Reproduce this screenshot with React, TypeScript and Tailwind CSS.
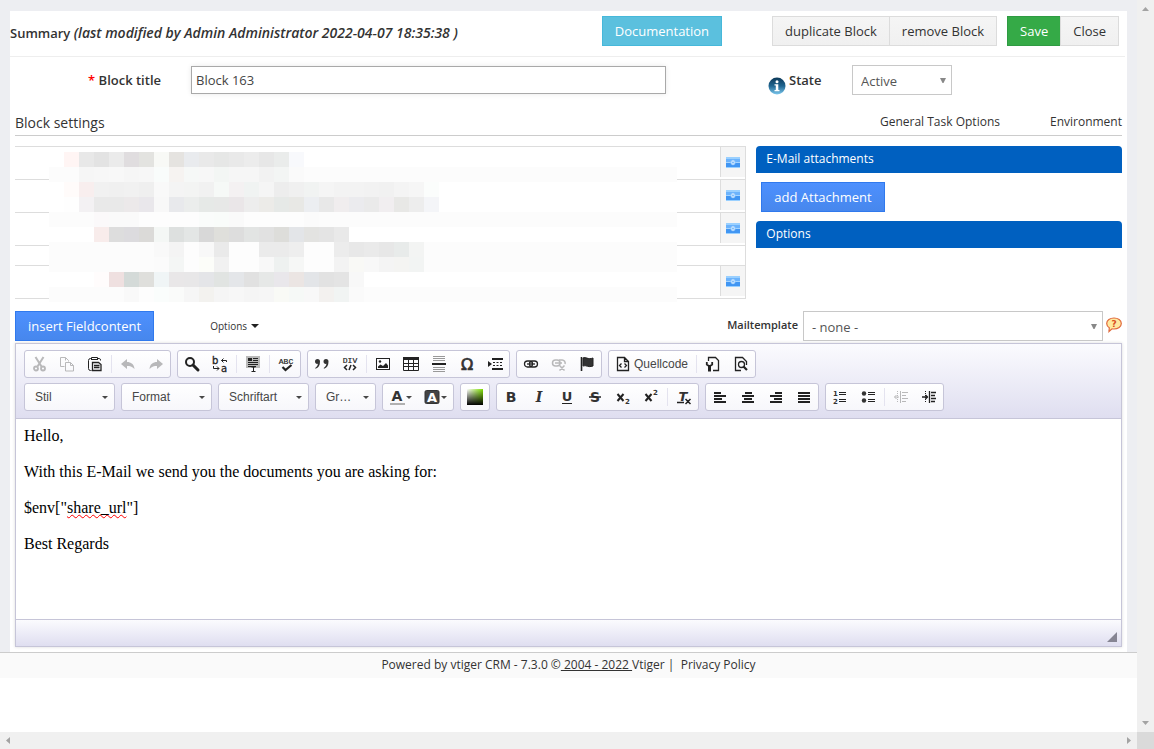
import React from "react";

type Kids = { children?: React.ReactNode };

/* Redacted preview: 15px cells; "from" is the column of the first cell. */
const mosaic: { bg: string; from: number; cells: string[] }[] = [
  { bg: "#ffffff", from: 1, cells: ["#fff5f4", "#e8e8e8", "#e3e3e3", "#ebebeb", "#e0dddf", "#e3e3e0", "#f8f9f6", "#e5e3e0", "#e9ebee", "#e9e9e9", "#e6e7e6", "#e9e9e9", "#ececec", "#e7e7e7", "#eaeceb", "#f8f9fc"] },
  { bg: "#fcfcfc", from: 2, cells: ["#f6f6f6", "#f7f7f7", "#f8f8f8", "#f6f6f6", "#f7f7f7", "#f9fcfb", "#f6f3f1", "#f6f8f7", "#f7f7f7", "#f3f6f4", "#f6f6f6", "#f6f6f6", "#f2f2f2", "#f3f5f4", "#fafafa"] },
  { bg: "#ffffff", from: 1, cells: ["#fffbfa", "#f8eeee", "#f1f1f1", "#f0f0f0", "#f1f1f1", "#efefef", "#f9f9f9", "#f4f4f4", "#f3f4f3", "#f1f1f1", "#f6f9f7", "#f4f1f2", "#f0f3f2", "#f5f5f5", "#ededed", "#f0f0f0", "#f1f3f2", "#f5f5f5", "#f3f3f3", "#f3f3f3", "#f2f2f2", "#f1f1f1", "#f4f4f4", "#f6f6f6", "#fbfdfc"] },
  { bg: "#ffffff", from: 1, cells: ["#fefefe", "#f3f1f3", "#e9e9e9", "#e9e9e9", "#ece9ea", "#e9e7eb", "#f8f8f8", "#e8e9ec", "#ebedec", "#e6e9e7", "#e7e8e7", "#eae6e8", "#ededed", "#ecebe8", "#e6e9e7", "#e8e8e5", "#eceef1", "#e8e8e8", "#f0edee", "#ebebee", "#eaeaea", "#f1eef0", "#e8e8e6", "#ededed", "#f4f5f8"] },
  { bg: "#fcfcfc", from: 3, cells: ["#fbf9fa", "#fafafa", "#fafafa", "#fdfdfd", "#fdfdfd", "#fdfdfd", "#fdfdfd", "#fafcfb", "#f9fcfa", "#fafafa", "#fdfdfd", "#fdfdfd", "#fdfdfd", "#fdfdfd", "#fbfbfb"] },
  { bg: "#ffffff", from: 3, cells: ["#f8eceb", "#dddddd", "#dcdbde", "#dbdad8", "#f4f7f5", "#dde0df", "#e3e6e5", "#d8d8d8", "#dfdfdb", "#dddddd", "#e2e4e3", "#e1e1e1", "#ddddda", "#e3e5e8", "#e3e3e1", "#e4e4e4", "#e9e9e9"] },
  { bg: "#fcfcfc", from: 7, cells: ["#f9f9f9", "#f4f4f4", "#fdfdfd", "#f8f8f8", "#eaeaea", "#fdfdfd", "#fdfdfd", "#ebebeb", "#ebebeb", "#eeeeee", "#fdfdfd", "#fdfdfd", "#ececec", "#e8e8e8", "#eaeaea", "#e7e7e7", "#e8ebea", "#f3f4f3"] },
  { bg: "#fcfcfc", from: 7, cells: ["#fbfbfb", "#f4f6f5", "#fdfdfd", "#fcfdf9", "#f1f1f1", "#fdfdfd", "#fdfdfd", "#f8f8f8", "#eef1f0", "#f6f7f6", "#fdfdfd", "#fdfdfd", "#f3f3f3", "#f9f9f6", "#f8f8f8", "#f4f4f4", "#f4f4f2", "#f2f4f3"] },
  { bg: "#ffffff", from: 3, cells: ["#fffcfc", "#efe0e0", "#d4dad8", "#dfdfdc", "#f0f5f6", "#e9e7e8", "#e8e7e8", "#e4e5e8", "#e1e4e2", "#e4e6e9", "#e1e1e1", "#e6e8e7", "#e9e7eb", "#ebe5e3", "#e3e5e8", "#e2e2e2", "#e4e4e4", "#f8f8f8"] },
  { bg: "#fcfcfc", from: 5, cells: ["#f9f9f9", "#fdfdfd", "#fafdfc", "#fafbfa", "#f6f6f6", "#f3f2ef", "#f5f5f5", "#f7f7f7", "#f5f5f5", "#f6f6f6", "#f9faf6", "#f6f9f7", "#f8f8f8", "#f3f1ef", "#f1f4f3", "#fafafa"] },
];

function Mosaic() {
  return (
    <svg width="628" height="150" shapeRendering="crispEdges" className="absolute left-[34px] top-[6px]" aria-hidden="true">
      {mosaic.map((row, r) => (
        <g key={r}>
          <rect x="0" y={r * 15} width="628" height="15" fill={row.bg} />
          {row.cells.map((fill, c) => (
            <rect key={c} x={(row.from + c) * 15} y={r * 15} width="15" height="15" fill={fill} />
          ))}
        </g>
      ))}
    </svg>
  );
}

function Icon({ children }: Kids) {
  return (
    <svg width="16" height="16" viewBox="0 0 16 16" fill="none" stroke="#222" className="overflow-visible" aria-hidden="true">
      {children}
    </svg>
  );
}

function Tool({ label, disabled, children }: Kids & { label: string; disabled?: boolean }) {
  return (
    <button type="button" aria-label={label} disabled={disabled} className={disabled ? "flex h-[26px] w-7 items-center justify-center opacity-30" : "flex h-[26px] w-7 items-center justify-center"}>
      <Icon>{children}</Icon>
    </button>
  );
}

function Group({ children }: Kids) {
  return <div className="flex items-center rounded-[3px] border border-[#c6c5d8] bg-linear-to-b from-white to-[#f7f7fb]">{children}</div>;
}

function Sep() {
  return <span className="mx-[2px] h-[18px] w-px bg-[#e4e3ef]" />;
}

function Caret() {
  return (
    <svg width="6" height="3" viewBox="0 0 6 3" className="pointer-events-none" aria-hidden="true">
      <path d="M0 0H6L3 3Z" fill="#474747" />
    </svg>
  );
}

function Combo({ text, label, small }: { text: string; label: string; small?: boolean }) {
  return (
    <Group>
      <div className={small ? "relative h-[26px] w-[59px]" : "relative h-[26px] w-[89px]"}>
        <select aria-label={label} className="h-full w-full appearance-none bg-transparent pl-[10px] font-['Liberation_Sans',Arial,sans-serif] text-[12px] text-[#474747] outline-none">
          <option>{text}</option>
        </select>
        <span className="pointer-events-none absolute right-[6px] top-[12px] flex">
          <Caret />
        </span>
      </div>
    </Group>
  );
}

function Glyph({ children, x = 8, y = 13, size = 14, italic, serif }: Kids & { x?: number; y?: number; size?: number; italic?: boolean; serif?: boolean }) {
  return (
    <text x={x} y={y} fontSize={size} fontWeight="700" fontStyle={italic ? "italic" : "normal"} textAnchor="middle" fill="#333" stroke="none" fontFamily={serif ? "DejaVu Serif, serif" : "DejaVu Sans, sans-serif"}>
      {children}
    </text>
  );
}

function MoneyIcon() {
  return (
    <svg width="14" height="11" viewBox="0 0 14 11" aria-hidden="true">
      <rect width="14" height="11" fill="#9ad0ff" />
      <rect y="2" width="14" height="3" fill="#6cb3fc" />
      <rect y="6" width="14" height="4" fill="#4196f3" />
      <rect y="5" width="14" height="1" fill="#a5d4ff" />
      <ellipse cx="7" cy="5.500" rx="2.500" ry="2.800" fill="#8cc5fd" />
      <ellipse cx="7" cy="5.500" rx="1.200" ry="1.700" fill="#5ba8f6" stroke="#eef7ff" strokeWidth="0.900" />
    </svg>
  );
}

function FieldRow({ short }: { short?: boolean }) {
  if (short) return <div className="h-5 border-t border-[#dddddd]" />;
  return (
    <div className="flex h-[33px] items-start justify-end border-t border-[#dddddd]">
      <button type="button" aria-label="Insert field" className="flex h-[30px] w-[25px] items-center justify-center border-l border-[#dddddd] bg-[#f5f5f5]">
        <MoneyIcon />
      </button>
    </div>
  );
}

function SelectArrow() {
  return (
    <svg width="6" height="5" viewBox="0 0 6 5" className="pointer-events-none absolute right-[6px] top-[13px]" aria-hidden="true">
      <path d="M0 0H6L3.500 5H2.500Z" fill="#888" />
    </svg>
  );
}

const plainButton = "h-[30px] border border-[#dcdcdc] bg-linear-to-b from-[#f5f5f5] to-[#f0f0f0] px-3 text-[13px] leading-[28px] text-[#333]";
const blueButton = "h-[30px] border border-[#3079ed] bg-linear-to-b from-[#4d90fe] to-[#4787ed] px-3 text-[13px] leading-[28px] text-white";
const panelTitle = "h-[27px] rounded-t-[4px] bg-[#0060c0] px-[10px] text-[12px] font-medium leading-[25px] text-white";
const selectBox = "h-full w-full appearance-none border border-[#c8c8c8] bg-white px-2 pt-[3px] text-[13px] text-[#555] outline-none";

function Toolbar() {
  return (
    <div className="flex flex-col gap-[5px] border-b border-[#c6c5d8] bg-linear-to-b from-[#fbfbfe] to-[#dfdef0] px-2 pb-[7px] pt-[6px]">
      <div className="flex flex-wrap gap-[6px]">
        <Group>
          <Tool label="Cut" disabled>
            <path d="M4.500 1L10.500 10.500M12.500 1L6.500 10.500" strokeWidth="2" />
            <circle cx="5" cy="12.500" r="2" strokeWidth="1.800" />
            <circle cx="12" cy="12.500" r="2" strokeWidth="1.800" />
          </Tool>
          <Tool label="Copy" disabled>
            <path d="M5.500 10.500H1.500V1.500H6.500L9.500 4.500V5.500M6.500 1.500V4.500" />
            <path d="M6.500 6.500H11.500L14.500 9.500V15H6.500ZM11.500 6.500V9.500H14.500" />
          </Tool>
          <Tool label="Paste">
            <path d="M4.500 14.500H3.500Q1.500 14.500 1.500 12.500V4.500Q1.500 2.500 3.500 2.500H4M11 2.500H12.500Q13.500 2.500 13.500 4.500" />
            <path d="M4.500 3V1.500H10.500V3M4 3.500H11" />
            <path d="M5.500 6.500H11.500L14 8.500V14.500H5.500ZM7 9.500H12.500M7 11.500H12.500" strokeWidth="1.300" />
          </Tool>
          <Sep />
          <Tool label="Undo" disabled>
            <path d="M1 8L7 3V6C11 6 14 8 14.500 13C12 10.500 10 10 7 10V13Z" fill="#222" stroke="none" />
          </Tool>
          <Tool label="Redo" disabled>
            <path d="M15 8L9 3V6C5 6 2 8 1.500 13C4 10.500 6 10 9 10V13Z" fill="#222" stroke="none" />
          </Tool>
        </Group>
        <Group>
          <Tool label="Find">
            <circle cx="6" cy="6" r="4" strokeWidth="2" />
            <path d="M9 9L14 14" strokeWidth="3" strokeLinecap="round" />
          </Tool>
          <Tool label="Replace">
            <text x="0" y="8" fontSize="10" fill="#222" stroke="#222" strokeWidth="0.300" fontFamily="DejaVu Sans, sans-serif">b</text>
            <text x="9" y="15.500" fontSize="10" fill="#222" stroke="#222" strokeWidth="0.300" fontFamily="DejaVu Sans, sans-serif">a</text>
            <path d="M14.500 6V4.500H9.500M11.500 2.500L9.500 4.500L11.500 6.500M1.500 10V12.500H7M5 10.500L7 12.500L5 14.500" />
          </Tool>
          <Sep />
          <Tool label="Select all">
            <rect x="1" y="0" width="14" height="12" fill="#b9b9b9" stroke="none" />
            <path d="M8 2.500H13M8 4.500H13M3 6.500H13M3 8.500H13M3 10.500H11" />
            <path d="M3 3.500H7" strokeWidth="3" />
            <path d="M8.500 11V16M6.500 11H10.500M6.500 15.500H10.500" />
          </Tool>
          <Sep />
          <Tool label="Spell check">
            <text x="8" y="8" fontSize="8" textAnchor="middle" fill="#222" stroke="#222" strokeWidth="0.200" fontFamily="Liberation Mono, monospace">ABC</text>
            <path d="M4.500 11L7.500 14L13.500 9" strokeWidth="2.200" />
          </Tool>
        </Group>
        <Group>
          <Tool label="Block quote">
            <path d="M1 5.500a2.500 2.500 0 0 1 5 0C6 9.500 4.500 11.500 1.500 12.800L1.200 12C3 10.800 3.700 9.500 3.900 7.800C2.300 8.300 1 7 1 5.500ZM9.500 5.500a2.500 2.500 0 0 1 5 0C14.500 9.500 13 11.500 10 12.800L9.700 12C11.500 10.800 12.200 9.500 12.400 7.800C10.800 8.300 9.500 7 9.500 5.500Z" fill="#333" stroke="none" />
          </Tool>
          <Tool label="Create div container">
            <text x="8" y="7" fontSize="8" textAnchor="middle" fill="#222" stroke="#222" strokeWidth="0.200" fontFamily="Liberation Mono, monospace">DIV</text>
            <path d="M5 9L2.500 11.500L5 14M11 9L13.500 11.500L11 14M9 9L7 14" strokeWidth="1.500" />
          </Tool>
          <Sep />
          <Tool label="Image">
            <rect x="1.500" y="2.500" width="13" height="11" />
            <circle cx="5" cy="5.500" r="1.200" fill="#222" stroke="none" />
            <path d="M3 12V10.500L5.500 8.500L8 10L11 7L13 9.500V12Z" fill="#222" stroke="none" />
          </Tool>
          <Tool label="Table">
            <path d="M0.500 2.500H15.500V14.500H0.500ZM0.500 7.500H15.500M0.500 10.500H15.500M5.500 4V14.500M10.500 4V14.500" />
            <path d="M0 2.500H16" strokeWidth="3" />
          </Tool>
          <Tool label="Horizontal line">
            <path d="M2 0.500H14M2 2.500H14M2 4.500H14M2 11.500H14M2 13.500H14M2 15.500H14" stroke="#999" />
            <path d="M1 8H15" strokeWidth="2" />
          </Tool>
          <Tool label="Special character">
            <text x="8" y="14" fontSize="16" textAnchor="middle" fill="#333" stroke="#333" strokeWidth="0.700" fontFamily="DejaVu Sans, sans-serif">Ω</text>
          </Tool>
          <Tool label="Page break">
            <path d="M1 5L5 8L1 11Z" fill="#222" stroke="none" />
            <path d="M5 3H16M5 13H16" strokeWidth="2" />
            <path d="M6 6.500H16M6 9.500H16" strokeDasharray="2 1.500" />
          </Tool>
        </Group>
        <Group>
          <Tool label="Link">
            <rect x="1.500" y="5" width="8" height="6" rx="3" strokeWidth="1.300" />
            <rect x="6.500" y="5" width="8" height="6" rx="3" strokeWidth="1.300" />
            <path d="M4 8H12" strokeWidth="1.300" />
          </Tool>
          <Tool label="Unlink" disabled>
            <rect x="1.500" y="4" width="7.500" height="6" rx="3" strokeWidth="1.500" />
            <path d="M8 4H11A3 3 0 0 1 14 8M4 7H11M8.500 9.500L13.500 14.500M13.500 9.500L8.500 14.500" strokeWidth="1.500" />
          </Tool>
          <Tool label="Anchor">
            <path d="M2.500 1V15" strokeWidth="1.600" />
            <path d="M4 2C7 0.500 9 4 14 2V10C9 12 7 8.500 4 10Z" fill="#333" stroke="#222" />
          </Tool>
        </Group>
        <Group>
          <button type="button" className="flex h-[26px] items-center gap-[3px] px-[6px] font-['Liberation_Sans',Arial,sans-serif] text-[12px] leading-[26px] text-[#474747]">
            <Icon>
              <path d="M8 14.500H2.500V1.500H9.500L13.500 5.500V14.500H8M9.500 1.500V5.500H13.500" strokeWidth="1.300" />
              <path d="M6.500 7.500L4.500 9.500L6.500 11.500M9.500 7.500L11.500 9.500L9.500 11.500" strokeWidth="1.300" />
            </Icon>
            Quellcode
          </button>
          <Sep />
          <Tool label="Templates">
            <path d="M3.500 5V1.500H10.500L13.500 4.500V14.500H8" strokeWidth="1.300" />
            <path d="M1.800 6V8.500L4.500 10.500L7.200 8.500V6" strokeWidth="1.800" />
            <path d="M4.500 9V15.500" strokeWidth="3" />
          </Tool>
          <Tool label="Preview">
            <path d="M8 14.500H2.500V1.500H9.500L13.500 5.500V9" strokeWidth="1.300" />
            <circle cx="8.500" cy="8.500" r="3" strokeWidth="1.300" />
            <path d="M10.500 10.500L14 14" strokeWidth="2.200" />
          </Tool>
        </Group>
      </div>
      <div className="flex flex-wrap gap-[6px]">
        <Combo text="Stil" label="Stil" />
        <Combo text="Format" label="Format" />
        <Combo text="Schriftart" label="Schriftart" />
        <Combo text="Gr…" label="Größe" small />
        <Group>
          <button type="button" aria-label="Text colour" className="flex h-[26px] w-[35px] items-center justify-center gap-px">
            <Icon>
              <Glyph y={12}>A</Glyph>
              <path d="M1 15H16" stroke="#999" strokeWidth="1.500" />
            </Icon>
            <Caret />
          </button>
          <button type="button" aria-label="Background colour" className="flex h-[26px] w-[35px] items-center justify-center gap-px">
            <Icon>
              <rect x="1" y="1.500" width="14" height="13" rx="1.500" fill="#444" stroke="#333" />
              <text x="8" y="13" fontSize="13" fontWeight="700" textAnchor="middle" fill="#fff" stroke="none" fontFamily="DejaVu Sans, sans-serif">A</text>
            </Icon>
            <Caret />
          </button>
        </Group>
        <Group>
          <Tool label="Colour picker">
            <defs>
              <linearGradient id="hue" x1="0" x2="1" y1="0" y2="0">
                <stop offset="0" stopColor="#fff" />
                <stop offset="1" stopColor="#7fe000" />
              </linearGradient>
              <linearGradient id="shade" x1="0" x2="0" y1="0" y2="1">
                <stop offset="0" stopColor="#000" stopOpacity="0" />
                <stop offset="1" stopColor="#000" />
              </linearGradient>
            </defs>
            <rect width="16" height="16" fill="url(#hue)" stroke="none" />
            <rect width="16" height="16" fill="url(#shade)" stroke="none" />
          </Tool>
        </Group>
        <Group>
          <Tool label="Bold"><Glyph>B</Glyph></Tool>
          <Tool label="Italic"><Glyph italic serif>I</Glyph></Tool>
          <Tool label="Underline">
            <Glyph y={12} size={13}>U</Glyph>
            <path d="M3 14.500H13" />
          </Tool>
          <Tool label="Strikethrough">
            <Glyph>S</Glyph>
            <path d="M2 8H14" strokeWidth="1.500" />
          </Tool>
          <Tool label="Subscript">
            <path d="M2.500 5L8.500 12M8.500 5L2.500 12" strokeWidth="2" />
            <Glyph x={12.5} y={15} size={7}>2</Glyph>
          </Tool>
          <Tool label="Superscript">
            <path d="M2.500 5L8.500 12M8.500 5L2.500 12" strokeWidth="2" />
            <Glyph x={12.5} y={6} size={7}>2</Glyph>
          </Tool>
          <Sep />
          <Tool label="Remove format">
            <Glyph x={7} y={12} size={13} italic>T</Glyph>
            <path d="M1 13.500H8M9.500 10L14.500 15M14.500 10L9.500 15" strokeWidth="1.500" />
          </Tool>
        </Group>
        <Group>
          <Tool label="Align left"><path d="M2 3.500H9M2 6.500H14M2 9.500H10M2 12.500H14" strokeWidth="2" shapeRendering="crispEdges" /></Tool>
          <Tool label="Centre"><path d="M4.500 3.500H11.500M2 6.500H14M4 9.500H12M2 12.500H14" strokeWidth="2" shapeRendering="crispEdges" /></Tool>
          <Tool label="Align right"><path d="M7 3.500H14M2 6.500H14M6 9.500H14M2 12.500H14" strokeWidth="2" shapeRendering="crispEdges" /></Tool>
          <Tool label="Justify"><path d="M2 3.500H14M2 6.500H14M2 9.500H14M2 12.500H14" strokeWidth="2" shapeRendering="crispEdges" /></Tool>
        </Group>
        <Group>
          <Tool label="Numbered list">
            <path d="M7 3.500H14M7 5.500H14M7 10.500H14M7 12.500H14" />
            <Glyph x={3.5} y={7} size={7}>1</Glyph>
            <Glyph x={3.5} y={15} size={7}>2</Glyph>
          </Tool>
          <Tool label="Bulleted list">
            <path d="M8 3.500H15M8 5.500H15M8 10.500H15M8 12.500H15" />
            <circle cx="4" cy="4.500" r="2.200" fill="#333" stroke="none" />
            <circle cx="4" cy="11.500" r="2.200" fill="#333" stroke="none" />
          </Tool>
          <Sep />
          <Tool label="Decrease indent" disabled>
            <path d="M7.500 2V14M9 3.500H15M9 6.500H13M9 9.500H15M9 12.500H13M1.500 8H6M3.500 6L1.500 8L3.500 10" />
            <path d="M4.500 2V14" strokeDasharray="1 1" />
          </Tool>
          <Tool label="Increase indent">
            <path d="M8.500 2V14M10 3.500H15M10 6.500H14M10 9.500H15M10 12.500H14M1 8H7M4.500 6L6.500 8L4.500 10" strokeWidth="1.300" />
            <path d="M4.500 2V14" strokeDasharray="1 1" />
          </Tool>
        </Group>
      </div>
    </div>
  );
}

export default function App() {
  return (
    <div className="flex min-h-screen flex-col bg-white font-['Open_Sans',sans-serif] text-[13px] text-[#333]">
      <div className="flex flex-1">
        <main className="min-w-0 flex-1">
          <div className="bg-[#edeef2] px-[10px] pt-[11px]">
            <div className="bg-white pb-[5px]">
              <header className="mr-[2px] flex h-[46px] items-start border-b border-[#eeeeee] pr-[6px] pt-[5px]">
                <h1 className="flex-1 text-[13px] font-semibold leading-[34px]">
                  Summary <em className="text-[14px]">(last modified by Admin Administrator 2022-04-07 18:35:38 )</em>
                </h1>
                <button type="button" className="mr-[50px] h-[30px] border border-[#46b8da] bg-[#5bc0de] px-3 text-[13px] leading-[28px] text-white">
                  Documentation
                </button>
                <div className="mr-[10px] flex">
                  <button type="button" className={plainButton}>duplicate Block</button>
                  <button type="button" className={plainButton + " -ml-px"}>remove Block</button>
                </div>
                <div className="flex">
                  <button type="button" className="h-[30px] border border-[#2f9b43] bg-[#35aa47] px-3 text-[13px] font-medium leading-[28px] text-white">Save</button>
                  <button type="button" className={plainButton + " -ml-px"}>Close</button>
                </div>
              </header>

              <div className="flex h-[51px] items-start pt-2">
                <label htmlFor="title" className="mr-[30px] w-[151px] text-right font-semibold leading-[30px]">
                  <span className="text-[#ff0000]">*</span> Block title
                </label>
                <input id="title" defaultValue="Block 163" className="mr-[102px] mt-px h-7 min-w-0 flex-1 border border-[#a9a9a9] px-1 text-[13px] text-[#444] shadow-[0_0_5px_#e8e8e8] outline-none" />
                <svg width="18" height="18" viewBox="0 0 18 18" className="mr-[3px] mt-[12px]" aria-hidden="true">
                  <defs>
                    <linearGradient id="info" x1="0" x2="0" y1="0" y2="1">
                      <stop offset="0" stopColor="#0c3858" />
                      <stop offset="0.500" stopColor="#1f6590" />
                      <stop offset="1" stopColor="#7cc8ee" />
                    </linearGradient>
                  </defs>
                  <circle cx="9" cy="9" r="8.500" fill="url(#info)" />
                  <circle cx="9" cy="4.700" r="1.500" fill="#fff" />
                  <path d="M6.500 7.300H10.300V13H11.500V14.300H6.500V13H7.800V8.500H6.500Z" fill="#fff" />
                </svg>
                <label htmlFor="state" className="w-[63px] font-semibold leading-[30px]">State</label>
                <div className="relative mr-[175px] h-[30px] w-[100px]">
                  <select id="state" className={selectBox}>
                    <option>Active</option>
                  </select>
                  <SelectArrow />
                </div>
              </div>

              <div className="px-[5px]">
                <div className="flex h-7 items-start border-b border-[#cccccc]">
                  <h2 className="flex-1 text-[14px] leading-[29px]">Block settings</h2>
                  <nav className="flex gap-[50px] text-[12px] leading-[27px]">
                    <a href="#general">General Task Options</a>
                    <a href="#environment">Environment</a>
                  </nav>
                </div>

                <div className="mt-[10px] grid grid-cols-[2fr_1fr] gap-[10px]">
                  <div className="relative">
                    <div className="border-b border-r border-[#dddddd]">
                      <FieldRow />
                      <FieldRow />
                      <FieldRow />
                      <FieldRow short />
                      <FieldRow />
                    </div>
                    <Mosaic />
                  </div>
                  <div>
                    <h3 className={panelTitle}>E-Mail attachments</h3>
                    <div className="px-[5px] py-[9px]">
                      <button type="button" className={blueButton}>add Attachment</button>
                    </div>
                    <h3 className={panelTitle}>Options</h3>
                  </div>
                </div>

                <div className="mt-3 flex items-start">
                  <button type="button" className={blueButton}>insert Fieldcontent</button>
                  <button type="button" className="ml-[56px] flex items-center gap-1 text-[10px] leading-[30px]">
                    Options
                    <svg width="8" height="4" viewBox="0 0 8 4" aria-hidden="true">
                      <path d="M0 0H8L4 4Z" fill="#222" />
                    </svg>
                  </button>
                  <label htmlFor="template" className="ml-auto mr-[5px] text-[11px] font-semibold leading-[28px]">Mailtemplate</label>
                  <div className="relative h-[30px] w-[300px]">
                    <select id="template" className={selectBox}>
                      <option>- none -</option>
                    </select>
                    <SelectArrow />
                  </div>
                  <button type="button" aria-label="Help" className="ml-[3px] mt-[6px]">
                    <svg width="16" height="16" viewBox="0 0 16 16" aria-hidden="true">
                      <path d="M8 1C12 1 15.300 3.300 15.300 6.500S12 12 8 12C7.300 12 6.700 12 6 11.800L3 14.500L3.300 10.800C1.700 9.800 0.700 8.300 0.700 6.500C0.700 3.300 4 1 8 1Z" fill="#ffe9a0" stroke="#e0693c" strokeWidth="1.200" />
                      <text x="8" y="10" fontSize="9" fontWeight="700" textAnchor="middle" fill="#d9501e" fontFamily="DejaVu Sans, sans-serif">?</text>
                    </svg>
                  </button>
                </div>

                <section className="mt-[2px] border border-[#c6c5d8] shadow-[0_0_3px_rgba(0,0,0,0.15)]">
                  <Toolbar />
                  <div role="textbox" aria-label="Mail text" contentEditable suppressContentEditableWarning spellCheck={false} className="flex min-h-[200px] flex-col gap-4 px-2 py-[7px] font-['Liberation_Serif',serif] text-[16px] leading-5 text-black outline-none">
                    <p>Hello,</p>
                    <p>With this E-Mail we send you the documents you are asking for:</p>
                    <p>
                      $env["<span className="underline decoration-[#ff0000] decoration-wavy decoration-1">share_url</span>"]
                    </p>
                    <p>Best Regards</p>
                  </div>
                  <div className="flex h-[27px] items-end justify-end border-t border-[#c6c5d8] bg-linear-to-b from-[#fbfbfe] to-[#dfdef0] pb-1 pr-1">
                    <svg width="10" height="10" viewBox="0 0 10 10" aria-hidden="true">
                      <path d="M10 0V10H0Z" fill="#868593" />
                    </svg>
                  </div>
                </section>
              </div>
            </div>
          </div>
          <footer className="h-[26px] border-t border-[#cccccc] bg-[#fafafa] text-center text-[12px] leading-[23px]">
            Powered by vtiger CRM - 7.3.0 ©<u> 2004 - 2022 </u>
            <a href="#vtiger">Vtiger</a> |&nbsp; <a href="#privacy">Privacy Policy</a>
          </footer>
        </main>
        <aside className="flex w-[17px] flex-col items-center justify-between bg-[#f0f0f0] py-[7px]" aria-hidden="true">
          <svg width="7" height="4" viewBox="0 0 7 4"><path d="M0 4H7L3.500 0Z" fill="#a3a3a3" /></svg>
          <svg width="7" height="4" viewBox="0 0 7 4"><path d="M0 0H7L3.500 4Z" fill="#a3a3a3" /></svg>
        </aside>
      </div>
      <div className="flex h-[17px] bg-[#f0f0f0]" aria-hidden="true">
        <div className="flex flex-1 items-center justify-between px-[6px]">
          <svg width="4" height="7" viewBox="0 0 4 7"><path d="M4 0V7L0 3.500Z" fill="#a3a3a3" /></svg>
          <svg width="4" height="7" viewBox="0 0 4 7"><path d="M0 0V7L4 3.500Z" fill="#a3a3a3" /></svg>
        </div>
        <div className="w-[17px] bg-[#dadada]" />
      </div>
    </div>
  );
}
